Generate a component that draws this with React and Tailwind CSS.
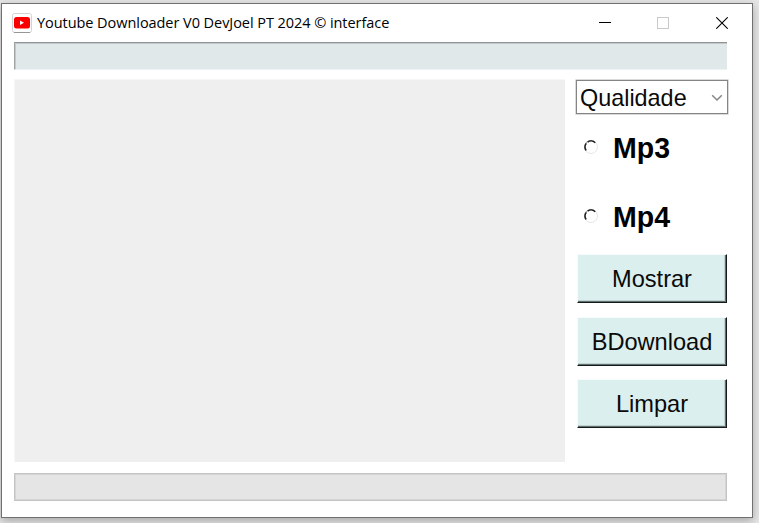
import React from "react";

function YoutubeIcon() {
  return (
    <svg width="20" height="20" viewBox="0 0 20 20" className="shrink-0">
      <rect x="0.5" y="0.5" width="19" height="19" rx="2" fill="#fff" stroke="#d6d3d6" />
      <path d="M2 19.5H18" stroke="#99969a" />
      <rect x="2" y="4" width="16" height="11.5" rx="2.5" fill="#fb0000" />
      <path d="M8 7.5L12 9.7L8 12Z" fill="#fff" />
    </svg>
  );
}

function TitleBar() {
  return (
    <header className="flex h-[38px] items-center pl-[10px] pr-[24px]">
      <YoutubeIcon />
      <h1 className="ml-[5px] w-[353px] whitespace-nowrap font-['Open_Sans','Noto_Sans',sans-serif] text-[14.5px] leading-[20px] tracking-[-0.055px] text-black">
        Youtube Downloader V0 DevJoel PT 2024 © interface
      </h1>
      <div className="ml-auto flex items-center">
        <svg width="12" height="12" viewBox="0 0 12 12">
          <path d="M0 5.5H12" stroke="#000" />
        </svg>
        <svg width="12" height="12" viewBox="0 0 12 12" className="ml-[46px] mr-[47px]">
          <rect x="0.5" y="0.5" width="11" height="11" fill="none" stroke="#c9c9c9" />
        </svg>
        <svg width="12" height="12" viewBox="0 0 12 12">
          <path d="M0.3 0.3L11.7 11.7M11.7 0.3L0.3 11.7" stroke="#000" strokeWidth="1.1" />
        </svg>
      </div>
    </header>
  );
}

function Radio({ label }) {
  return (
    <label className="flex h-[36px] items-center">
      <svg width="16" height="16" viewBox="0 0 16 16" className="-mt-[3px] shrink-0">
        <circle cx="8" cy="8" r="6.5" fill="#fff" stroke="#e6e6e6" />
        <path d="M2.8 11.9A6.5 6.5 0 0 1 12.4 3.2" fill="none" stroke="#999" />
        <path d="M3.2 11.4A5.9 5.9 0 0 1 3.4 4.4M4.6 3.2A5.9 5.9 0 0 1 12.2 3.8" fill="none" stroke="#1c1c1c" strokeWidth="1.4" />
      </svg>
      <span className="ml-[14px] origin-center scale-y-[1.04] text-[28.5px] font-bold leading-[36px] text-black">{label}</span>
    </label>
  );
}

function Button({ children }) {
  return (
    <button className="flex h-[49px] w-[150px] items-start justify-center border-b border-l border-r border-t border-b-[#141a1a] border-l-[#f6fbfb] border-r-[#141a1a] border-t-[#f6fbfb] bg-[#dbefee] text-[23.6px] leading-[49px] shadow-[inset_-1px_-1px_0_#5f6f6e,inset_-2px_-2px_0_#c0d3d2]">
      {children}
    </button>
  );
}

export default function App() {
  return (
    <div className="h-[523px] w-[759px] overflow-hidden bg-[#e6e6e6] pl-px pt-[3px] font-['Liberation_Sans',Arial,sans-serif] text-[#0a0a0a]">
      <main className="h-[515px] w-[752px] border border-[#707070] bg-white shadow-[0_3px_9px_rgba(0,0,0,0.28)]">
        <TitleBar />
        <div className="ml-[12px] h-[28px] w-[713px] border-b border-l border-t border-b-[#eef2f2] border-l-[#a0a4a5] border-t-[#8f9394] bg-[#e0e8ea] shadow-[inset_1px_1px_0_#c3c9cb]" />
        <div className="ml-[12px] mt-[9px] flex">
          <section className="h-[383px] w-[551px] border-l border-t border-[#f7f7f7] bg-[#efefef]" />
          <aside className="ml-[10px] w-[154px]">
            <div className="ml-px mt-px flex h-[34px] w-[152px] items-center justify-between border border-[#858585] bg-white pl-[3px] pr-[4px] shadow-[0_0_0_0.5px_#b5b5b5]">
              <span className="pt-[2px] text-[23.4px] leading-[32px]">Qualidade</span>
              <svg width="12" height="8" viewBox="0 0 12 8" className="mt-[2px]">
                <path d="M1.2 1.2L6 6L10.8 1.2" fill="none" stroke="#858585" strokeWidth="1.5" />
              </svg>
            </div>
            <div className="ml-[8px] mt-[16px] flex flex-col gap-[33px]">
              <Radio label="Mp3" />
              <Radio label="Mp4" />
            </div>
            <div className="ml-[2px] mt-[19px] flex flex-col">
              <Button>Mostrar</Button>
              <div className="mb-[13px] mt-[14px]">
                <Button>BDownload</Button>
              </div>
              <Button>Limpar</Button>
            </div>
          </aside>
        </div>
        <div className="ml-[12px] mt-[11px] h-[28px] w-[713px] border border-[#c4c4c4] bg-[#e5e5e5] shadow-[inset_0_0_0_1px_#d5d5d5]" />
      </main>
    </div>
  );
}
